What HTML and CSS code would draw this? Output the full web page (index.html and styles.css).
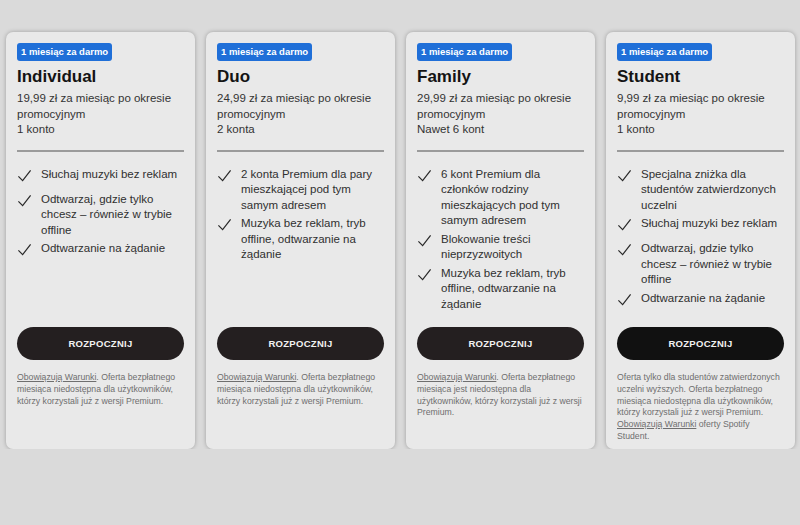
FILE: index.html
```html
<!DOCTYPE html>
<html lang="pl">

<head>
  <meta charset="UTF-8">
  <meta name="viewport" content="width=device-width, initial-scale=1.0">
  <title>Plany Premium</title>
  <link rel="stylesheet" href="styles.css">
</head>

<body>
  <div class="plans">

    <div class="card">
      <span class="badge">1 miesiąc za darmo</span>
      <h2 class="title">Individual</h2>
      <p class="price">19,99 zł za miesiąc po okresie promocyjnym<br>1 konto</p>
      <hr class="divider">
      <ul class="features">
        <li><svg class="check" viewBox="0 0 16 16"><polyline points="1.5,9 6,13.5 14.5,2.5" /></svg><span>Słuchaj muzyki bez reklam</span></li>
        <li><svg class="check" viewBox="0 0 16 16"><polyline points="1.5,9 6,13.5 14.5,2.5" /></svg><span>Odtwarzaj, gdzie tylko chcesz – również w trybie offline</span></li>
        <li><svg class="check" viewBox="0 0 16 16"><polyline points="1.5,9 6,13.5 14.5,2.5" /></svg><span>Odtwarzanie na żądanie</span></li>
      </ul>
      <div class="footer">
        <button class="start">ROZPOCZNIJ</button>
        <p class="terms"><a href="#">Obowiązują Warunki</a>. Oferta bezpłatnego miesiąca niedostępna dla użytkowników, którzy korzystali już z wersji Premium.</p>
      </div>
    </div>

    <div class="card">
      <span class="badge">1 miesiąc za darmo</span>
      <h2 class="title">Duo</h2>
      <p class="price">24,99 zł za miesiąc po okresie promocyjnym<br>2 konta</p>
      <hr class="divider">
      <ul class="features">
        <li><svg class="check" viewBox="0 0 16 16"><polyline points="1.5,9 6,13.5 14.5,2.5" /></svg><span>2 konta Premium dla pary mieszkającej pod tym samym adresem</span></li>
        <li><svg class="check" viewBox="0 0 16 16"><polyline points="1.5,9 6,13.5 14.5,2.5" /></svg><span>Muzyka bez reklam, tryb offline, odtwarzanie na żądanie</span></li>
      </ul>
      <div class="footer">
        <button class="start">ROZPOCZNIJ</button>
        <p class="terms"><a href="#">Obowiązują Warunki</a>. Oferta bezpłatnego miesiąca niedostępna dla użytkowników, którzy korzystali już z wersji Premium.</p>
      </div>
    </div>

    <div class="card">
      <span class="badge">1 miesiąc za darmo</span>
      <h2 class="title">Family</h2>
      <p class="price">29,99 zł za miesiąc po okresie promocyjnym<br>Nawet 6 kont</p>
      <hr class="divider">
      <ul class="features">
        <li><svg class="check" viewBox="0 0 16 16"><polyline points="1.5,9 6,13.5 14.5,2.5" /></svg><span>6 kont Premium dla członków rodziny mieszkających pod tym samym adresem</span></li>
        <li><svg class="check" viewBox="0 0 16 16"><polyline points="1.5,9 6,13.5 14.5,2.5" /></svg><span>Blokowanie treści nieprzyzwoitych</span></li>
        <li><svg class="check" viewBox="0 0 16 16"><polyline points="1.5,9 6,13.5 14.5,2.5" /></svg><span>Muzyka bez reklam, tryb offline, odtwarzanie na żądanie</span></li>
      </ul>
      <div class="footer">
        <button class="start">ROZPOCZNIJ</button>
        <p class="terms"><a href="#">Obowiązują Warunki</a>. Oferta bezpłatnego miesiąca jest niedostępna dla użytkowników, którzy korzystali już z wersji Premium.</p>
      </div>
    </div>

    <div class="card">
      <span class="badge">1 miesiąc za darmo</span>
      <h2 class="title">Student</h2>
      <p class="price">9,99 zł za miesiąc po okresie promocyjnym<br>1 konto</p>
      <hr class="divider">
      <ul class="features">
        <li><svg class="check" viewBox="0 0 16 16"><polyline points="1.5,9 6,13.5 14.5,2.5" /></svg><span>Specjalna zniżka dla studentów zatwierdzonych uczelni</span></li>
        <li><svg class="check" viewBox="0 0 16 16"><polyline points="1.5,9 6,13.5 14.5,2.5" /></svg><span>Słuchaj muzyki bez reklam</span></li>
        <li><svg class="check" viewBox="0 0 16 16"><polyline points="1.5,9 6,13.5 14.5,2.5" /></svg><span>Odtwarzaj, gdzie tylko chcesz – również w trybie offline</span></li>
        <li><svg class="check" viewBox="0 0 16 16"><polyline points="1.5,9 6,13.5 14.5,2.5" /></svg><span>Odtwarzanie na żądanie</span></li>
      </ul>
      <div class="footer">
        <button class="start dark">ROZPOCZNIJ</button>
        <p class="terms">Oferta tylko dla studentów zatwierdzonych uczelni wyższych. Oferta bezpłatnego miesiąca niedostępna dla użytkowników, którzy korzystali już z wersji Premium. <a href="#">Obowiązują Warunki</a> oferty Spotify Student.</p>
      </div>
    </div>

  </div>
</body>

</html>
```

FILE: styles.css
```css
* {
  box-sizing: border-box;
  margin: 0;
  padding: 0;
}
body {
  background: #dadada;
  font-family: "Liberation Sans", Arial, sans-serif;
  color: #2e2e2e;
}
.plans {
  display: grid;
  grid-template-columns: repeat(4, 189px);
  gap: 11px;
  padding: 32px 5px 0 6px;
}
.card {
  height: 417px;
  background: #e9e9e9;
  border-radius: 7px;
  box-shadow: 0 0 4px rgba(0, 0, 0, 0.28);
  padding: 11px 11px 6px;
  display: flex;
  flex-direction: column;
}
.badge {
  align-self: flex-start;
  background: #1f6fd8;
  color: #fff;
  font-size: 9.5px;
  font-weight: bold;
  line-height: 12px;
  padding: 3px 4px;
  height: 18px;
  border-radius: 3px;
}
.title {
  margin-top: 5px;
  font-size: 17px;
  line-height: 22px;
  color: #141414;
}
.price {
  margin-top: 3px;
  font-size: 11.5px;
  line-height: 15.5px;
  color: #333;
}
.divider {
  border: none;
  border-top: 2px solid #9b9b9b;
  margin-top: 12px;
}
.features {
  list-style: none;
  flex: 1;
  margin-top: 15px;
}
.features li {
  display: flex;
  min-height: 22px;
  margin-bottom: 3px;
  font-size: 11.5px;
  line-height: 15.5px;
  color: #303030;
}
.check {
  flex: none;
  width: 15px;
  height: 15px;
  margin: 1px 9px 0 0;
  fill: none;
  stroke: #2a2a2a;
  stroke-width: 1.3;
}
.footer {
  height: 116px;
}
.start {
  width: 100%;
  height: 33px;
  border: none;
  border-radius: 17px;
  background: #241f20;
  color: #f2f2f2;
  font-family: inherit;
  font-size: 9.5px;
  font-weight: bold;
  letter-spacing: 0.3px;
}
.start.dark {
  background: #111;
}
.terms {
  margin-top: 12px;
  font-size: 8.7px;
  line-height: 11.8px;
  color: #6f6f6f;
}
.terms a {
  color: #6f6f6f;
}
```
